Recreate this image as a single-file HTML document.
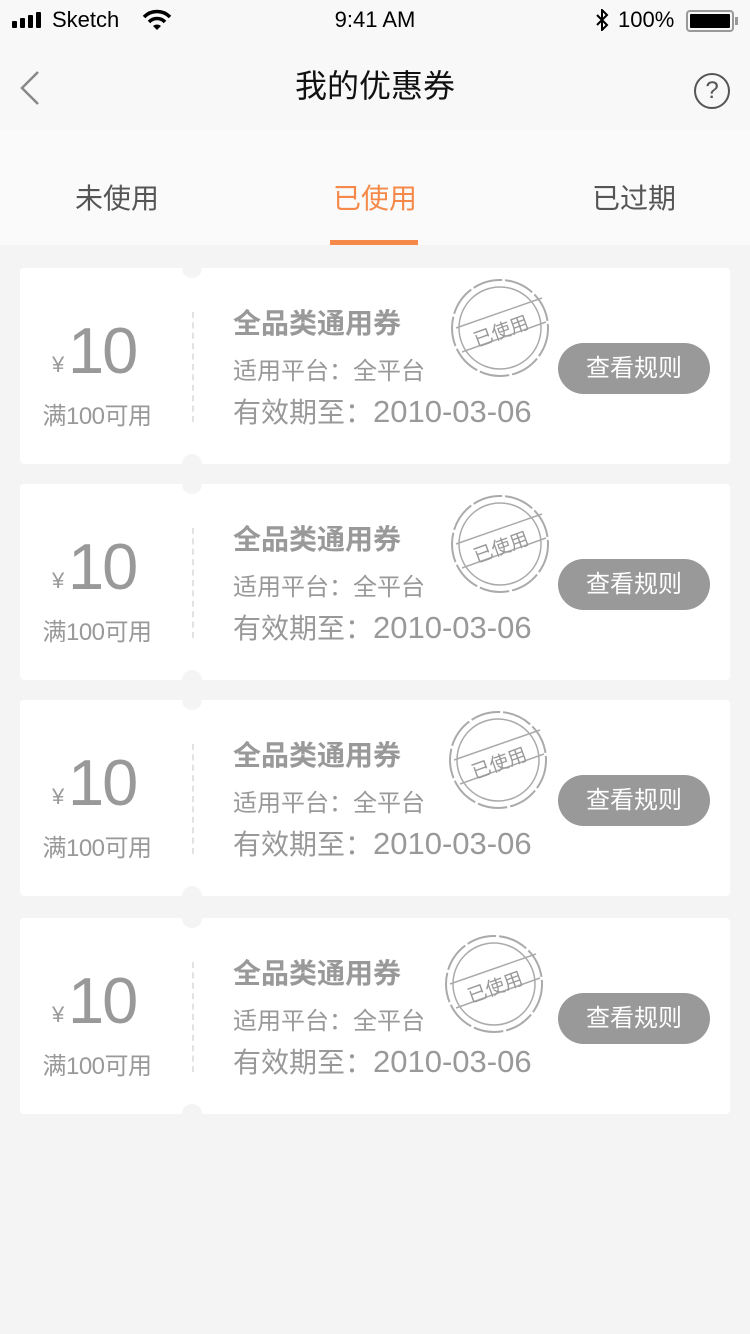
<!DOCTYPE html><html><head><meta charset="utf-8"><style>
*{margin:0;padding:0;box-sizing:border-box}
body{width:750px;height:1334px;background:#f4f4f4;font-family:"Liberation Sans","Noto Sans CJK SC",sans-serif;position:relative;overflow:hidden}
.abs{position:absolute}
.card{position:absolute;left:20px;width:710px;height:196px;background:#fff;border-radius:4px}
.notch{position:absolute;left:162px;width:20px;height:20px;border-radius:50%;background:#f4f4f4}
.dash{position:absolute;left:172px;top:44px;height:110px;border-left:2px dashed #e2e2e2}
.yen{position:absolute;left:32px;top:84px;font-size:22px;color:#999}
.num{position:absolute;left:48px;top:48px;font-size:65px;color:#999;line-height:70px;letter-spacing:-2px}
.min{position:absolute;left:0;width:154px;text-align:center;top:128px;font-size:24px;color:#999;letter-spacing:-0.5px}
.t1{position:absolute;left:213px;top:34px;font-size:28px;font-weight:bold;color:#999}
.t2{position:absolute;left:213px;top:83px;font-size:24px;color:#999}
.t3{position:absolute;left:213px;top:123px;font-size:28px;color:#999;white-space:nowrap}
.t3 span{font-size:31px}
.btn{position:absolute;left:538px;top:75px;width:152px;height:51px;border-radius:26px;background:#999;color:#fff;font-size:24px;text-align:center;line-height:51px}
.stamp{position:absolute;left:428px;top:8px}
</style></head><body>
<div class="abs" style="left:0;top:0;width:750px;height:130px;background:#f8f8f8"></div>
<div class="abs" style="left:12px;top:12px;display:flex;align-items:flex-end;gap:3px"><i style="width:5px;height:7px;background:#000;display:block;border-radius:1px"></i><i style="width:5px;height:10px;background:#000;display:block;border-radius:1px"></i><i style="width:5px;height:13px;background:#000;display:block;border-radius:1px"></i><i style="width:5px;height:16px;background:#000;display:block;border-radius:1px"></i></div>
<div class="abs" style="left:52px;top:7px;font-size:22px">Sketch</div>
<svg class="abs" style="left:142px;top:9px" width="30" height="22" viewBox="0 0 30 22"><path d="M2 8a18 18 0 0 1 26 0" stroke="#000" stroke-width="3.5" fill="none"/><path d="M7 13a11 11 0 0 1 16 0" stroke="#000" stroke-width="3.5" fill="none"/><path d="M11 17l4 4 4-4a6 6 0 0 0-8 0z" fill="#000"/></svg>
<div class="abs" style="left:0;width:750px;text-align:center;top:7px;font-size:22px">9:41 AM</div>
<svg class="abs" style="left:595px;top:9px" width="14" height="22" viewBox="0 0 14 22"><path d="M2 6l10 10-5 5V1l5 5L2 16" stroke="#000" stroke-width="2" fill="none"/></svg>
<div class="abs" style="left:618px;top:7px;font-size:22px">100%</div>
<div class="abs" style="left:686px;top:10px;width:48px;height:22px;border:2px solid #999;border-radius:4px;padding:2px"><div style="width:100%;height:100%;background:#000;border-radius:1px"></div></div>
<div class="abs" style="left:735px;top:17px;width:3px;height:8px;background:#999"></div>
<svg class="abs" style="left:18px;top:70px" width="24" height="36" viewBox="0 0 24 36"><path d="M20 2L4 18l16 16" stroke="#888" stroke-width="2.5" fill="none"/></svg>
<div class="abs" style="left:0;width:750px;text-align:center;top:61px;font-size:32px;color:#111">我的优惠券</div>
<div class="abs" style="left:694px;top:73px;width:36px;height:36px;border:2px solid #555;border-radius:50%;text-align:center;line-height:32px;font-size:24px;color:#555">?</div>
<div class="abs" style="left:0;top:130px;width:750px;height:115px;background:#fafafa"></div>
<div class="abs" style="left:75px;top:177px;font-size:28px;color:#555">未使用</div>
<div class="abs" style="left:333px;top:177px;font-size:28px;color:#f5894a">已使用</div>
<div class="abs" style="left:592px;top:177px;font-size:28px;color:#555">已过期</div>
<div class="abs" style="left:330px;top:240px;width:88px;height:5px;background:#f5894a"></div>

<div class="card" style="top:268px"><div class="notch" style="top:-10px"></div><div class="notch" style="bottom:-10px"></div><div class="dash"></div><div class="yen">¥</div><div class="num">10</div><div class="min">满100可用</div><div class="t1">全品类通用券</div><div class="t2">适用平台：全平台</div><div class="t3">有效期至：<span>2010-03-06</span></div>
<svg class="stamp" width="104" height="104" viewBox="0 0 104 104"><circle cx="52" cy="52" r="48" stroke="#aaa" stroke-width="2" fill="none" stroke-dasharray="30 3"/><circle cx="52" cy="52" r="41" stroke="#aaa" stroke-width="1.5" fill="none"/><path d="M8 52L94 22M14 76L98 46" stroke="#aaa" stroke-width="1.5"/><text x="52" y="62" transform="rotate(-20 52 52)" text-anchor="middle" font-size="19" fill="#999" font-family="Noto Sans CJK SC">已使用</text></svg>
<div class="btn">查看规则</div></div>

<div class="card" style="top:484px"><div class="notch" style="top:-10px"></div><div class="notch" style="bottom:-10px"></div><div class="dash"></div><div class="yen">¥</div><div class="num">10</div><div class="min">满100可用</div><div class="t1">全品类通用券</div><div class="t2">适用平台：全平台</div><div class="t3">有效期至：<span>2010-03-06</span></div>
<svg class="stamp" width="104" height="104" viewBox="0 0 104 104"><circle cx="52" cy="52" r="48" stroke="#aaa" stroke-width="2" fill="none" stroke-dasharray="30 3"/><circle cx="52" cy="52" r="41" stroke="#aaa" stroke-width="1.5" fill="none"/><path d="M8 52L94 22M14 76L98 46" stroke="#aaa" stroke-width="1.5"/><text x="52" y="62" transform="rotate(-20 52 52)" text-anchor="middle" font-size="19" fill="#999" font-family="Noto Sans CJK SC">已使用</text></svg>
<div class="btn">查看规则</div></div>

<div class="card" style="top:700px"><div class="notch" style="top:-10px"></div><div class="notch" style="bottom:-10px"></div><div class="dash"></div><div class="yen">¥</div><div class="num">10</div><div class="min">满100可用</div><div class="t1">全品类通用券</div><div class="t2">适用平台：全平台</div><div class="t3">有效期至：<span>2010-03-06</span></div>
<svg class="stamp" style="left:426px" width="104" height="104" viewBox="0 0 104 104"><circle cx="52" cy="52" r="48" stroke="#aaa" stroke-width="2" fill="none" stroke-dasharray="30 3"/><circle cx="52" cy="52" r="41" stroke="#aaa" stroke-width="1.5" fill="none"/><path d="M8 52L94 22M14 76L98 46" stroke="#aaa" stroke-width="1.5"/><text x="52" y="62" transform="rotate(-20 52 52)" text-anchor="middle" font-size="19" fill="#999" font-family="Noto Sans CJK SC">已使用</text></svg>
<div class="btn">查看规则</div></div>

<div class="card" style="top:918px"><div class="notch" style="top:-10px"></div><div class="notch" style="bottom:-10px"></div><div class="dash"></div><div class="yen">¥</div><div class="num">10</div><div class="min">满100可用</div><div class="t1">全品类通用券</div><div class="t2">适用平台：全平台</div><div class="t3">有效期至：<span>2010-03-06</span></div>
<svg class="stamp" style="left:422px;top:14px" width="104" height="104" viewBox="0 0 104 104"><circle cx="52" cy="52" r="48" stroke="#aaa" stroke-width="2" fill="none" stroke-dasharray="30 3"/><circle cx="52" cy="52" r="41" stroke="#aaa" stroke-width="1.5" fill="none"/><path d="M8 52L94 22M14 76L98 46" stroke="#aaa" stroke-width="1.5"/><text x="52" y="62" transform="rotate(-20 52 52)" text-anchor="middle" font-size="19" fill="#999" font-family="Noto Sans CJK SC">已使用</text></svg>
<div class="btn">查看规则</div></div>
</body></html>
